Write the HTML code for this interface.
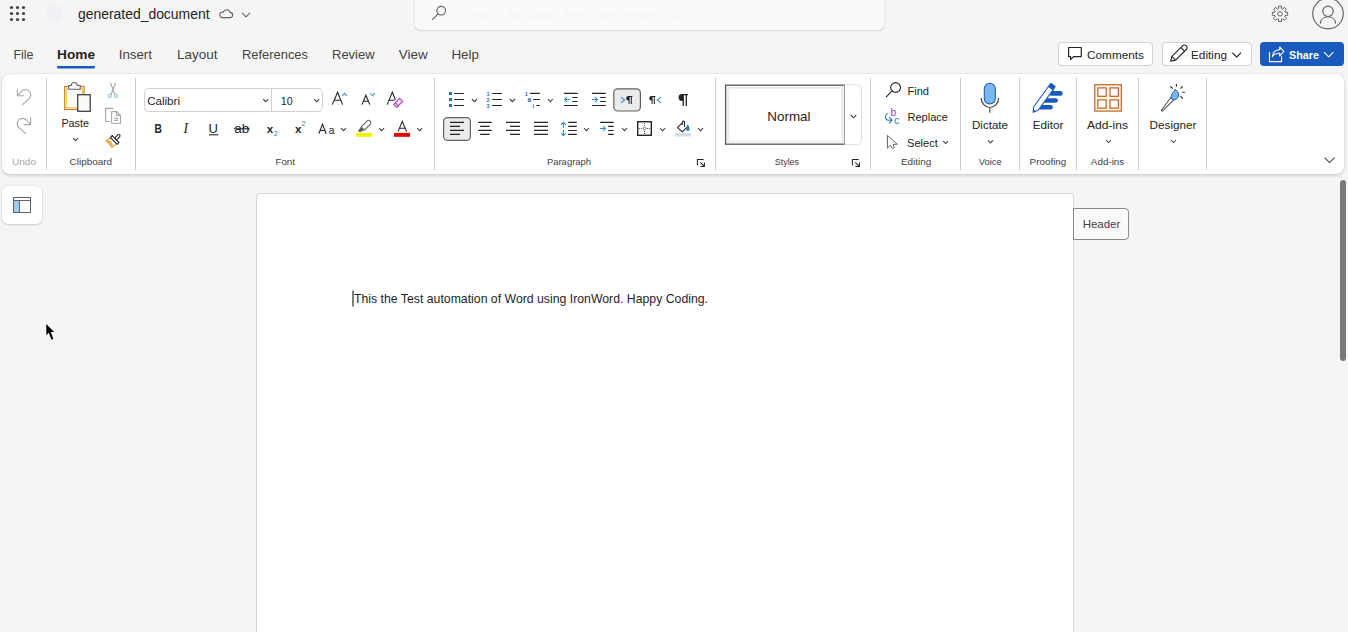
<!DOCTYPE html>
<html><head><meta charset="utf-8"><style>
html,body{margin:0;padding:0;width:1348px;height:632px;overflow:hidden;background:#f5f5f5;font-family:"Liberation Sans", sans-serif;}
.abs{position:absolute;box-sizing:border-box}
#search{left:414.5px;top:-10px;width:469px;height:40px;background:#fafafa;border-radius:5px;box-shadow:0 1px 2px rgba(0,0,0,0.14),0 0 1px rgba(0,0,0,0.12)}
#ribbon{left:2px;top:74px;width:1342px;height:100px;background:#fff;border-radius:8px;box-shadow:0 1.5px 3.5px rgba(0,0,0,0.13),0 0 2px rgba(0,0,0,0.11)}
#page{left:256px;top:193px;width:818px;height:460px;background:#fff;border:1px solid #d6d6d6;border-radius:4px}
#side{left:2px;top:186px;width:40px;height:38px;background:#fff;border-radius:6px;box-shadow:0 1px 2px rgba(0,0,0,0.14),0 0 2px rgba(0,0,0,0.12)}
#hdr{left:1073px;top:208px;width:56px;height:31.5px;background:#fafafa;border:1px solid #8a8a8a;border-radius:0 4px 4px 0}
.btn{top:42px;height:24px;background:#fff;border:1px solid #d1d1d1;border-radius:4px}
#share{left:1260px;top:42px;width:84px;height:24px;background:#185abd;border-radius:4px}
#scroll{left:1339.5px;top:180px;width:6px;height:181px;background:#7a7a7a;border-radius:3px}
svg{position:absolute;left:0;top:0}
</style></head><body>
<div class="abs" id="search"></div>
<div class="abs" id="ribbon"></div>
<div class="abs" id="page"></div>
<div class="abs" id="side"></div>
<div class="abs" id="hdr"></div>
<div class="abs btn" style="left:1058px;width:95px"></div>
<div class="abs btn" style="left:1161.5px;width:90px"></div>
<div class="abs" id="share"></div>
<div class="abs" id="scroll"></div>
<svg width="1348" height="632" viewBox="0 0 1348 632" font-family='"Liberation Sans", sans-serif'>
<g id="seps" stroke="#cccccc" stroke-width="1">
<line x1="46.5" y1="78" x2="46.5" y2="170"/>
<line x1="135.5" y1="78" x2="135.5" y2="170"/>
<line x1="434.5" y1="78" x2="434.5" y2="170"/>
<line x1="715.5" y1="78" x2="715.5" y2="170"/>
<line x1="870.5" y1="78" x2="870.5" y2="170"/>
<line x1="960.5" y1="78" x2="960.5" y2="170"/>
<line x1="1019.5" y1="78" x2="1019.5" y2="170"/>
<line x1="1076.5" y1="78" x2="1076.5" y2="170"/>
<line x1="1138.5" y1="78" x2="1138.5" y2="170"/>
<line x1="1206.5" y1="78" x2="1206.5" y2="170"/>
</g>
<rect x="57" y="66" width="38" height="2.5" rx="1" fill="#185abd"/>
<!-- top bar -->
<g fill="#424242">
<circle cx="11.5" cy="7.5" r="1.6"/><circle cx="17.5" cy="7.5" r="1.6"/><circle cx="23.5" cy="7.5" r="1.6"/>
<circle cx="11.5" cy="13.5" r="1.6"/><circle cx="17.5" cy="13.5" r="1.6"/><circle cx="23.5" cy="13.5" r="1.6"/>
<circle cx="11.5" cy="19.5" r="1.6"/><circle cx="17.5" cy="19.5" r="1.6"/><circle cx="23.5" cy="19.5" r="1.6"/>
</g>
<rect x="46.5" y="5" width="15.5" height="16.5" rx="3" fill="#f0f1f4"/>
<g fill="none" stroke="#616161" stroke-width="1.1" stroke-linecap="round" stroke-linejoin="round">
<path d="M221.8,17.6 H229.8 A2.6,2.6 0 0 0 230.2,12.4 A3.7,3.7 0 0 0 223.2,12.2 A2.7,2.7 0 0 0 221.8,17.6 Z"/>
<path d="M242.3,13.2 L246,16.8 L249.7,13.2"/>
</g>
<g fill="none" stroke="#616161" stroke-width="1.1" stroke-linecap="round">
<circle cx="441.2" cy="10.7" r="4.3"/>
<path d="M438.1,13.9 L432.6,19.4"/>
</g>
<text x="460.5" y="18.5" font-size="13" fill="#f6f6f6" textLength="251" lengthAdjust="spacingAndGlyphs">Search for tools, help, and more (Alt + Q)</text>
<!-- gear -->
<g fill="none" stroke="#616161" stroke-width="1">
<path d="M1285.25,12.17 L1287.66,12.33 L1287.66,15.27 L1285.25,15.43 L1284.86,16.37 L1286.46,18.17 L1284.37,20.26 L1282.57,18.66 L1281.63,19.05 L1281.47,21.46 L1278.53,21.46 L1278.37,19.05 L1277.43,18.66 L1275.63,20.26 L1273.54,18.17 L1275.14,16.37 L1274.75,15.43 L1272.34,15.27 L1272.34,12.33 L1274.75,12.17 L1275.14,11.23 L1273.54,9.43 L1275.63,7.34 L1277.43,8.94 L1278.37,8.55 L1278.53,6.14 L1281.47,6.14 L1281.63,8.55 L1282.57,8.94 L1284.37,7.34 L1286.46,9.43 L1284.86,11.23 Z" stroke-linejoin="round"/>
<circle cx="1280" cy="13.8" r="2.3"/>
</g>
<g fill="none" stroke="#616161" stroke-width="1.1">
<circle cx="1328" cy="13.6" r="15.3"/>
<circle cx="1328" cy="11.3" r="5.2"/>
<path d="M1320.4,23.8 C1320.4,19.2 1323.8,16.8 1328,16.8 C1332.2,16.8 1335.6,19.2 1335.6,23.8"/>
</g>
<!-- buttons -->
<g fill="none" stroke="#242424" stroke-width="1.2" stroke-linejoin="round">
<path d="M1068.6,47.5 H1081.3 V56.6 H1073.5 L1070.6,59.6 V56.6 H1068.6 Z"/>
</g>
<g fill="none" stroke="#242424" stroke-width="1.1" stroke-linejoin="round">
<path d="M1170.6,61.2 L1171.9,56.4 L1182.6,45.8 A1.9,1.9 0 0 1 1186.3,49.5 L1175.6,60.1 Z"/>
<path d="M1180.9,47.5 L1184.5,51.1"/>
<path d="M1171.9,56.4 L1175.6,60.1"/>
<path d="M1232.3,52.6 L1236.7,57 L1241.1,52.6"/>
</g>
<g fill="none" stroke="#ffffff" stroke-width="1.1" stroke-linejoin="round" stroke-linecap="round">
<path d="M1269.5,52.3 V61.6 H1281.6 V56.5"/>
<path d="M1279.7,47 L1283.9,51.4 L1279.7,55.8 V53.3 C1276.6,53.1 1274,54.2 1272.3,56.6 C1272.7,52.3 1275.6,50 1279.7,49.8 Z"/>
<path d="M1324.3,52.4 L1328.7,56.8 L1333.1,52.4"/>
</g>
<!-- undo redo -->
<g fill="none" stroke="#a6a6a6" stroke-width="1.1" stroke-linecap="round" stroke-linejoin="round">
<path d="M17.4,89 V95.8 H24"/>
<path d="M17.6,95.6 L21.6,91.2 A5.3,5.3 0 0 1 29.3,98.6 L22.5,104.6"/>
<path d="M30.6,117.8 V124.6 H24"/>
<path d="M30.4,124.4 L26.4,120 A5.3,5.3 0 0 0 18.7,127.4 L25.5,133.4"/>
</g>
<!-- paste -->
<g>
<rect x="64.7" y="86.5" width="19.4" height="23" fill="#fff" stroke="#c8841f" stroke-width="1.2"/>
<rect x="66.4" y="88.2" width="16" height="19.6" fill="#fcfbf8" stroke="#f6c860" stroke-width="1.3"/>
<path d="M68.7,89.3 V85.5 H71.3 A3,3 0 0 1 77.3,85.5 H80.2 V89.3 Z" fill="#fff" stroke="#616161" stroke-width="1.1"/>
<rect x="77.7" y="94.7" width="12.5" height="16.6" fill="#fafafa" stroke="#424242" stroke-width="1.3"/>
</g>
<path d="M73.2,138.2 L75.6,140.6 L78,138.2" fill="none" stroke="#424242" stroke-width="1.1"/>
<!-- cut copy painter -->
<g fill="none" stroke="#a6a6a6" stroke-width="1.1" stroke-linecap="round">
<path d="M110.5,83 L115,94.5 M115.6,83 L111,94.5"/>
</g>
<g fill="none" stroke="#9cc3e5" stroke-width="1.1">
<circle cx="109.8" cy="96" r="1.6"/><circle cx="116" cy="96" r="1.6"/>
</g>
<g fill="none" stroke="#a6a6a6" stroke-width="1.1" stroke-linejoin="round">
<path d="M109.8,121.5 H105.6 V108.4 H112.2 L113.2,109.4"/>
<path d="M111.6,123.3 V111.6 H116.8 L120.5,115.3 V123.3 Z"/>
<path d="M116.6,111.8 V115.4 H120.3"/>
<path d="M114,118.2 H118 M114,120.4 H118"/>
</g>
<g transform="translate(113.3,141.3) rotate(45)">
<path d="M-4.2,-0.8 L4,-0.8 L3.3,5.2 L-5.6,4.8 Z" fill="#fff" stroke="#e0902f" stroke-width="1"/>
<path d="M-5.2,3.6 L-1.2,1.4 L3.5,3.4 L3.3,5.2 L-5.6,4.8 Z" fill="#f6b04a"/>
<rect x="-4.8" y="-3.2" width="9.6" height="2.6" fill="#fff" stroke="#242424" stroke-width="1.1"/>
<rect x="-1.3" y="-9" width="2.6" height="5.8" rx="1.3" fill="#fff" stroke="#242424" stroke-width="1.1"/>
</g>
<!-- font boxes -->
<rect x="144.5" y="88.5" width="178" height="23" rx="4" fill="#fff" stroke="#d1d1d1" stroke-width="1"/>
<line x1="271.5" y1="89" x2="271.5" y2="111" stroke="#d1d1d1"/>
<g fill="none" stroke="#424242" stroke-width="1.1">
<path d="M263.2,99.2 L265.7,101.7 L268.2,99.2"/>
<path d="M314.2,99.2 L316.7,101.7 L319.2,99.2"/>
</g>
<g fill="none" stroke="#242424" stroke-width="1.1" stroke-linejoin="miter">
<path d="M332.3,104.6 L337.6,92.2 L342.6,104.6 M334.2,100.3 H341"/>
<path d="M362,104.6 L365.9,95.2 L369.8,104.6 M363.4,101.2 H368.4"/>
<path d="M387.2,104.6 L392.3,92.2 L395.4,99.8 M389.1,100.3 H394.5"/>
</g>
<g fill="none" stroke="#3a96dd" stroke-width="1.1">
<path d="M342.2,95.8 L344.6,93.3 L347,95.8"/>
<path d="M370.3,93.3 L372.6,95.6 L375,93.3"/>
</g>
<path d="M393.6,104.3 L399.6,98.3 L402.6,101.4 L396.6,107.4 Z M395.2,102.7 L398.2,105.8" fill="#f4e1f7" stroke="#b146c2" stroke-width="1.1"/>
<!-- BIU row -->
<text x="154.6" y="133.2" font-size="13.6" font-weight="700" fill="#242424" textLength="7.4" lengthAdjust="spacingAndGlyphs">B</text>
<text x="183.4" y="133.2" font-size="13.6" font-style="italic" font-family="Liberation Serif" fill="#242424">I</text>
<text x="208.6" y="133.2" font-size="13" fill="#242424">U</text>
<line x1="209" y1="134.8" x2="218.3" y2="134.8" stroke="#242424" stroke-width="1.1"/>
<text x="234.3" y="133.2" font-size="12.5" fill="#242424" textLength="15" lengthAdjust="spacingAndGlyphs">ab</text>
<line x1="233.8" y1="128.8" x2="249.8" y2="128.8" stroke="#242424" stroke-width="1.1"/>
<text x="266.8" y="132.8" font-size="11.6" font-weight="700" fill="#242424">x</text>
<text x="273.8" y="136.2" font-size="7" fill="#2b7bb9">2</text>
<text x="294.9" y="132.8" font-size="11.6" font-weight="700" fill="#242424">x</text>
<text x="301.4" y="125.8" font-size="7" fill="#2b7bb9">2</text>
<g fill="none" stroke="#242424" stroke-width="1.1">
<path d="M318.8,133.7 L322.5,124.3 L326.2,133.7 M320.1,130.5 H324.9"/>
</g>
<text x="328.8" y="133.7" font-size="10.2" fill="#242424">a</text>
<g fill="none" stroke="#424242" stroke-width="1.1">
<path d="M341,128.2 L343.5,130.7 L346,128.2"/>
<path d="M379.1,128.2 L381.6,130.7 L384.1,128.2"/>
<path d="M417.2,128.2 L419.7,130.7 L422.2,128.2"/>
</g>
<rect x="356" y="132.9" width="16" height="3.9" fill="#f2f200"/>
<g transform="translate(364.6,126.6) rotate(45)">
<path d="M-2.3,2.6 V-5.6 A2.3,2.3 0 0 1 2.3,-5.6 V2.6 Z" fill="#fff" stroke="#616161" stroke-width="1.05" stroke-linejoin="round"/>
<path d="M-2.3,2.6 L-1.6,7.9 L0.9,7.2 L2.3,2.6 Z" fill="#616161"/>
</g>
<rect x="394" y="132.9" width="16" height="3.9" fill="#e40000"/>
<path d="M398,131.6 L402.3,121.4 L406.6,131.6 M399.4,128.2 H405.2" fill="none" stroke="#242424" stroke-width="1.1"/>
<!-- paragraph -->
<g fill="#1f6fb8">
<rect x="449" y="92.1" width="3" height="2.9"/><rect x="449" y="98.1" width="3" height="2.9"/><rect x="449" y="104.1" width="3" height="2.9"/>
</g>
<g stroke="#242424" stroke-width="1.15">
<path d="M454.1,93.5 H463.9 M454.1,99.5 H463.9 M454.1,105.5 H463.9"/>
<path d="M492.2,93.5 H502 M492.2,99.5 H502 M492.2,105.5 H502"/>
<path d="M530.1,93.3 H539.9 M533.2,99.5 H539.9 M536.4,105.5 H539.9"/>
<path d="M564,93.3 H577.7 M572.2,97.5 H577.7 M572.2,101.5 H577.7 M564,105.5 H577.7"/>
<path d="M592.1,93.3 H605.8 M600.1,97.5 H605.8 M600.1,101.5 H605.8 M592.1,105.5 H605.8"/>
</g>
<g font-size="5.6" fill="#1f6fb8" font-weight="700">
<text x="486.6" y="96">1</text><text x="486.4" y="101.9">2</text><text x="486.4" y="107.9">3</text>
<text x="524.8" y="96">1</text><text x="527.6" y="102" font-size="6.4">a</text><text x="532.4" y="107.8" font-size="6">i</text>
</g>
<g fill="none" stroke="#424242" stroke-width="1.1">
<path d="M471.9,99 L474.45,101.7 L477,99"/>
<path d="M509.9,99 L512.45,101.7 L515,99"/>
<path d="M548,99 L550.4,101.7 L552.8,99"/>
</g>
<g fill="none" stroke="#2a8ad0" stroke-width="1.05" stroke-linecap="round" stroke-linejoin="round">
<path d="M569.7,99.5 H564.6 M566.9,97.2 L564.6,99.5 L566.9,101.8"/>
<path d="M592.4,99.5 H597.5 M595.2,97.2 L597.5,99.5 L595.2,101.8"/>
</g>
<rect x="613.8" y="88.8" width="26.6" height="22.2" rx="4" fill="#ebebeb" stroke="#616161" stroke-width="1.2"/>
<g fill="none" stroke="#3a96dd" stroke-width="1.2">
<path d="M621,97.2 L624.6,100 L621,102.8"/>
<path d="M660.8,97.2 L657.2,100 L660.8,102.8"/>
</g>
<g fill="#242424">
<path d="M628.3,96 H632.4 V97 H631.8 V103.9 H630.8 V97 H629.6 V103.9 H628.6 V100.6 A2.3,2.3 0 0 1 628.3,96 Z"/>
<path d="M651.3,96 H655.4 V97 H654.8 V103.9 H653.8 V97 H652.6 V103.9 H651.6 V100.6 A2.3,2.3 0 0 1 651.3,96 Z"/>
<path d="M681.5,94.1 H687.9 V95.3 H686.9 V105.9 H685.6 V95.3 H683.9 V105.9 H682.6 V100.9 A3.4,3.4 0 0 1 681.5,94.1 Z"/>
</g>
<rect x="443.6" y="117.6" width="26.8" height="22.8" rx="4" fill="#ebebeb" stroke="#616161" stroke-width="1.2"/>
<g stroke="#242424" stroke-width="1.15">
<path d="M450,122.3 H464 M450,126.3 H460 M450,130.3 H464 M450,134.4 H460"/>
<path d="M478.2,122.3 H491.7 M480.2,126.3 H489.7 M478.2,130.3 H491.7 M480.2,134.4 H489.7"/>
<path d="M506,122.3 H520 M510,126.3 H520 M506,130.3 H520 M510,134.4 H520"/>
<path d="M534,122.3 H548 M534,126.3 H548 M534,130.3 H548 M534,134.4 H548"/>
<path d="M568.2,122.4 H576.8 M568.2,126.4 H576.8 M568.2,130.5 H576.8 M568.2,134.4 H576.8"/>
<path d="M600.2,122.4 H613.7 M608.1,126.4 H613.7 M608.1,130.5 H613.7 M608.1,134.4 H613.7"/>
</g>
<g fill="none" stroke="#2a8ad0" stroke-width="1.05" stroke-linecap="round" stroke-linejoin="round">
<path d="M563.4,122.3 V127.7 M561.3,124.4 L563.4,122.3 L565.5,124.4"/>
<path d="M563.4,130.2 V135.6 M561.3,133.5 L563.4,135.6 L565.5,133.5"/>
<path d="M600.4,128.5 H605.6 M603.4,126.3 L605.6,128.5 L603.4,130.7"/>
</g>
<g fill="none" stroke="#424242" stroke-width="1.1">
<path d="M584,128 L586.5,130.7 L589,128"/>
<path d="M622,128 L624.5,130.7 L627,128"/>
<path d="M660,128 L662.55,130.9 L665.1,128"/>
<path d="M698,128 L700.55,130.9 L703.1,128"/>
</g>
<rect x="637.7" y="121.7" width="13.6" height="13.6" fill="none" stroke="#242424" stroke-width="1.4"/>
<g fill="#424242">
<circle cx="644.5" cy="123.6" r="0.62"/><circle cx="644.5" cy="125.6" r="0.62"/><circle cx="644.5" cy="131.4" r="0.62"/><circle cx="644.5" cy="133.4" r="0.62"/>
<circle cx="639.5" cy="128.5" r="0.62"/><circle cx="641.5" cy="128.5" r="0.62"/><circle cx="647.5" cy="128.5" r="0.62"/><circle cx="649.5" cy="128.5" r="0.62"/>
</g>
<path d="M644.5,126.9 L646.1,128.5 L644.5,130.1 L642.9,128.5 Z" fill="#fff" stroke="#424242" stroke-width="0.75"/>
<rect x="675.1" y="133.1" width="15.6" height="3.4" fill="#d3ddec"/>
<path d="M677.5,127.6 L682.3,131.9 L686.3,127.9 M677.5,127.6 L681.8,123.3 M682.3,124.4 V122.2 A1.1,1.1 0 0 1 684.5,122.2 V126.6" fill="none" stroke="#242424" stroke-width="1.1" stroke-linejoin="round" stroke-linecap="round"/>
<path d="M686.5,130.7 C686.2,128 686.6,125.6 687.6,124.4 C688.9,125.6 689.7,128 689.3,130.7 Z" fill="#1f6fb8"/>
<g fill="none" stroke="#242424" stroke-width="1.05">
<path d="M697.4,165.5 V159.4 H703.6 M700.2,162.4 L704.4,166.4 M704.4,162.4 V166.4 H700.4"/>
<path d="M852.4,165.5 V159.4 H858.6 M855.2,162.4 L859.4,166.4 M859.4,162.4 V166.4 H855.4"/>
</g>
<!-- styles -->
<rect x="725.6" y="85.2" width="119" height="59" fill="#fff" stroke="#616161" stroke-width="1.4"/>
<rect x="728.2" y="87.8" width="113.8" height="53.8" fill="none" stroke="#ebebeb" stroke-width="2"/>
<path d="M844.6,84.8 H857.5 A4,4 0 0 1 861.5,88.8 V140.6 A4,4 0 0 1 857.5,144.6 H844.6" fill="#fff" stroke="#e0e0e0" stroke-width="1"/>
<path d="M850.8,115 L853.5,117.8 L856.2,115" fill="none" stroke="#424242" stroke-width="1.1"/>
<!-- editing -->
<g fill="none" stroke="#242424" stroke-width="1.1" stroke-linecap="round">
<circle cx="895.6" cy="87.5" r="4.9"/>
<path d="M891.9,91.1 L886.3,96.8"/>
</g>
<text x="890.4" y="115.8" font-size="10.4" fill="#8f4bb3">b</text>
<text x="894" y="123.7" font-size="10.4" fill="#2b7bb9">c</text>
<path d="M887.2,113.6 C884.8,115.2 884.8,119.8 888.2,120.2 H892.2 M889.5,117.5 L892.2,120.2 L889.5,122.9" fill="none" stroke="#2b7bb9" stroke-width="1.1" stroke-linecap="round" stroke-linejoin="round"/>
<path d="M887.4,135.3 V148.2 L890.4,145.3 L892.6,148.6 L894.4,147.6 L893.2,144.5 L897.2,144.2 Z" fill="none" stroke="#616161" stroke-width="1" stroke-linejoin="round"/>
<path d="M943.2,141.2 L945.6,143.5 L948,141.2" fill="none" stroke="#424242" stroke-width="1.05"/>
<!-- dictate -->
<rect x="984.3" y="83.3" width="11" height="20.7" rx="5.5" fill="#7ab7ee" stroke="#1e5aa8" stroke-width="1.05"/>
<path d="M981.2,97.9 A8.7,9.6 0 0 0 998.6,97.9" fill="none" stroke="#424242" stroke-width="1.2"/>
<line x1="989.8" y1="107.5" x2="989.8" y2="112.8" stroke="#616161" stroke-width="1.3"/>
<g fill="none" stroke="#424242" stroke-width="1.05">
<path d="M988,140.4 L990.5,142.9 L993,140.4"/>
<path d="M1106,140 L1108.5,142.5 L1111,140"/>
<path d="M1171,140 L1173.5,142.5 L1176,140"/>
<path d="M1324.6,157.6 L1329.6,162.6 L1334.6,157.6"/>
</g>
<!-- editor -->
<g fill="#185abd">
<rect x="1049" y="91.1" width="13.7" height="4.6" rx="2.3"/>
<rect x="1043" y="98.2" width="14.9" height="4.6" rx="2.3"/>
<rect x="1038" y="105.1" width="14.8" height="4.5" rx="2.25"/>
</g>
<g transform="translate(1043.3,98.45) rotate(36)">
<path d="M-2.8,-13 H2.8 V12.6 L0,17.2 L-2.8,12.6 Z" fill="#fff" stroke="#185abd" stroke-width="1.1" stroke-linejoin="round"/>
<rect x="-3.3" y="-17.2" width="6.6" height="4.8" rx="0.8" fill="#185abd"/>
<path d="M-1.4,14.8 L0,17.2 L1.4,14.8 Z" fill="#185abd"/>
</g>
<!-- addins -->
<rect x="1094.8" y="84.7" width="26.5" height="26.4" fill="#fef6df" stroke="#c0622a" stroke-width="1.2"/>
<g fill="#fff" stroke="#c0622a" stroke-width="1.2">
<rect x="1097.8" y="87.9" width="8.4" height="8.4"/>
<rect x="1110" y="87.9" width="8.4" height="8.4"/>
<rect x="1097.8" y="99.9" width="8.4" height="8.2"/>
<rect x="1110" y="99.9" width="8.4" height="8.2"/>
</g>
<!-- designer -->
<g transform="translate(1167,104.8) rotate(41)"><path d="M-1.9,-7.8 L1.9,-7.8 L0.7,7.4 A0.7,0.7 0 0 1 -0.7,7.4 Z" fill="#fff" stroke="#424242" stroke-width="0.95" stroke-linejoin="round"/></g>
<path d="M1175.2,89.2 C1174.8,91.8 1170.8,93.5 1171,97.2 C1171.2,99.2 1173,100 1174.5,99.8 C1177,99.4 1179,97 1178.6,94 C1178.3,92 1176.2,90.5 1175.2,89.2 Z" fill="#7ab7ee" stroke="#1e5aa8" stroke-width="1"/>
<g stroke="#242424" stroke-width="1.05">
<path d="M1176.4,84 V86.8 M1170.2,86.3 L1172.6,88.5 M1180.4,88.5 L1182.8,86.3 M1182.2,92.2 H1184.9 M1180.4,96.2 L1182.8,98.5"/>
</g>
<!-- side panel icon -->
<rect x="13.5" y="197.5" width="17" height="15" fill="#fff" stroke="#616161" stroke-width="1"/>
<rect x="14" y="201" width="5.4" height="11" fill="#a0cdf2"/>
<path d="M13.5,200.5 H30.5 M19.5,200.5 V212.5" stroke="#616161" stroke-width="1" fill="none"/>
<!-- caret & cursor -->
<line x1="353" y1="290.5" x2="353" y2="306.5" stroke="#000" stroke-width="1"/>
<path d="M46.3,324 V335.2 L48.8,332.8 L51.4,339.8 L53.4,339 L50.8,332 L54.2,331.9 Z" fill="#fff" stroke="#fff" stroke-width="1.6" stroke-linejoin="round"/><path d="M46.3,324 V335.2 L48.8,332.8 L51.4,339.8 L53.4,339 L50.8,332 L54.2,331.9 Z" fill="#000"/>

<text x="78" y="19.3" font-size="14" fill="#242424" font-weight="400" textLength="131.5" lengthAdjust="spacingAndGlyphs">generated_document</text>
<text x="13.4" y="59.1" font-size="13.5" fill="#424242" font-weight="400" textLength="20.0" lengthAdjust="spacingAndGlyphs">File</text>
<text x="118.7" y="59.1" font-size="13.5" fill="#424242" font-weight="400" textLength="33.3" lengthAdjust="spacingAndGlyphs">Insert</text>
<text x="177" y="59.1" font-size="13.5" fill="#424242" font-weight="400" textLength="40.4" lengthAdjust="spacingAndGlyphs">Layout</text>
<text x="242" y="59.1" font-size="13.5" fill="#424242" font-weight="400" textLength="66.0" lengthAdjust="spacingAndGlyphs">References</text>
<text x="332" y="59.1" font-size="13.5" fill="#424242" font-weight="400" textLength="42.6" lengthAdjust="spacingAndGlyphs">Review</text>
<text x="398.8" y="59.1" font-size="13.5" fill="#424242" font-weight="400" textLength="28.9" lengthAdjust="spacingAndGlyphs">View</text>
<text x="451.4" y="59.1" font-size="13.5" fill="#424242" font-weight="400" textLength="27.6" lengthAdjust="spacingAndGlyphs">Help</text>
<text x="57" y="59.1" font-size="13.7" fill="#242424" font-weight="700" textLength="38.0" lengthAdjust="spacingAndGlyphs">Home</text>
<text x="1087" y="58.9" font-size="11.8" fill="#242424" font-weight="400" textLength="57.0" lengthAdjust="spacingAndGlyphs">Comments</text>
<text x="1191" y="58.9" font-size="11.8" fill="#242424" font-weight="400" textLength="36.0" lengthAdjust="spacingAndGlyphs">Editing</text>
<text x="1289" y="58.9" font-size="11.5" fill="#ffffff" font-weight="700" textLength="30.0" lengthAdjust="spacingAndGlyphs">Share</text>
<text x="11.9" y="164.7" font-size="9.6" fill="#a6a6a6" font-weight="400" textLength="24.1" lengthAdjust="spacingAndGlyphs">Undo</text>
<text x="69.6" y="164.7" font-size="9.6" fill="#424242" font-weight="400" textLength="42.4" lengthAdjust="spacingAndGlyphs">Clipboard</text>
<text x="275.5" y="164.7" font-size="9.6" fill="#424242" font-weight="400" textLength="19.5" lengthAdjust="spacingAndGlyphs">Font</text>
<text x="546.9" y="164.7" font-size="9.6" fill="#424242" font-weight="400" textLength="44.2" lengthAdjust="spacingAndGlyphs">Paragraph</text>
<text x="774.8" y="164.7" font-size="9.6" fill="#424242" font-weight="400" textLength="24.2" lengthAdjust="spacingAndGlyphs">Styles</text>
<text x="901" y="164.7" font-size="9.6" fill="#424242" font-weight="400" textLength="30.2" lengthAdjust="spacingAndGlyphs">Editing</text>
<text x="978.8" y="164.7" font-size="9.6" fill="#424242" font-weight="400" textLength="23.0" lengthAdjust="spacingAndGlyphs">Voice</text>
<text x="1029.6" y="164.7" font-size="9.6" fill="#424242" font-weight="400" textLength="36.7" lengthAdjust="spacingAndGlyphs">Proofing</text>
<text x="1090.8" y="164.7" font-size="9.6" fill="#424242" font-weight="400" textLength="33.5" lengthAdjust="spacingAndGlyphs">Add-ins</text>
<text x="61.4" y="127" font-size="11.5" fill="#242424" font-weight="400" textLength="27.6" lengthAdjust="spacingAndGlyphs">Paste</text>
<text x="147.2" y="104.7" font-size="11.6" fill="#242424" font-weight="400" textLength="32.8" lengthAdjust="spacingAndGlyphs">Calibri</text>
<text x="280.8" y="104.7" font-size="11.2" fill="#242424" font-weight="400" textLength="11.9" lengthAdjust="spacingAndGlyphs">10</text>
<text x="767.3" y="121.1" font-size="13" fill="#242424" font-weight="400" textLength="43.2" lengthAdjust="spacingAndGlyphs">Normal</text>
<text x="907.4" y="94.7" font-size="11.5" fill="#242424" font-weight="400" textLength="21.6" lengthAdjust="spacingAndGlyphs">Find</text>
<text x="907.4" y="121.1" font-size="11.5" fill="#242424" font-weight="400" textLength="40.6" lengthAdjust="spacingAndGlyphs">Replace</text>
<text x="907" y="147.1" font-size="11.5" fill="#242424" font-weight="400" textLength="30.9" lengthAdjust="spacingAndGlyphs">Select</text>
<text x="972" y="128.9" font-size="11.5" fill="#242424" font-weight="400" textLength="36.0" lengthAdjust="spacingAndGlyphs">Dictate</text>
<text x="1032.8" y="128.9" font-size="11.5" fill="#242424" font-weight="400" textLength="30.5" lengthAdjust="spacingAndGlyphs">Editor</text>
<text x="1087" y="128.9" font-size="11.5" fill="#242424" font-weight="400" textLength="41.0" lengthAdjust="spacingAndGlyphs">Add-ins</text>
<text x="1149.6" y="128.9" font-size="11.5" fill="#242424" font-weight="400" textLength="46.8" lengthAdjust="spacingAndGlyphs">Designer</text>
<text x="1082.7" y="228.2" font-size="11.8" fill="#424242" font-weight="400" textLength="37.6" lengthAdjust="spacingAndGlyphs">Header</text>
<text x="354" y="303.3" font-size="12.6" fill="#1f1f1f" font-weight="400" textLength="354.0" lengthAdjust="spacingAndGlyphs">This the Test automation of Word using IronWord. Happy Coding.</text>
</svg>
</body></html>
